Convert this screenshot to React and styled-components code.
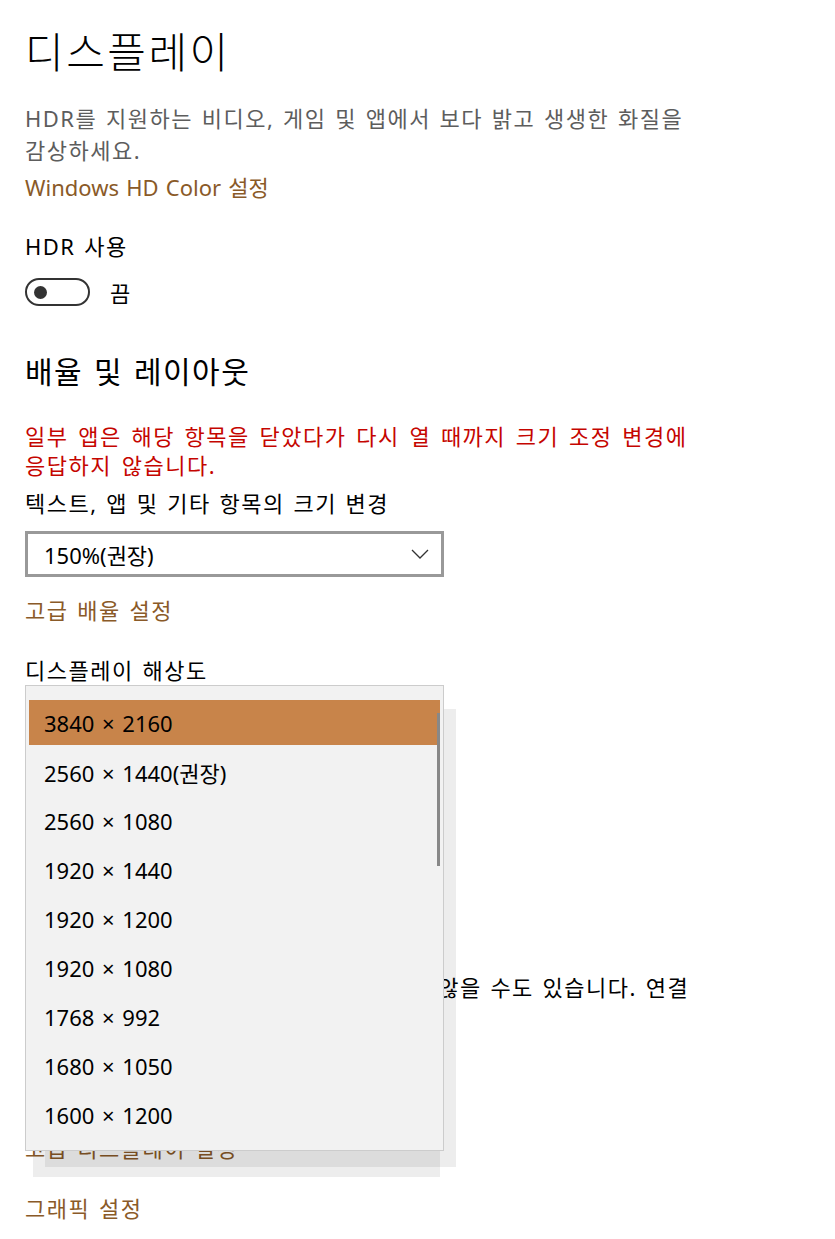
import React from 'react'
import styled, { createGlobalStyle } from 'styled-components'

const GlobalStyle = createGlobalStyle`
    html, body {
        margin: 0;
        padding: 0;
        background: #fff;
    }
    body {
        font-family: "Noto Sans", "Noto Sans CJK KR", sans-serif;
        color: #000;
    }
`;

const resolutions = [
    '3840 × 2160',
    '2560 × 1440(권장)',
    '2560 × 1080',
    '1920 × 1440',
    '1920 × 1200',
    '1920 × 1080',
    '1768 × 992',
    '1680 × 1050',
    '1600 × 1200',
];

function Toggle({ label }) {
    return (
        <ToggleRow>
            <Track>
                <Knob />
            </Track>
            <ToggleText>{label}</ToggleText>
        </ToggleRow>
    )
}

function Chevron() {
    return (
        <svg width="18" height="10" viewBox="0 0 18 10">
            <path d="M1 1 L9 9 L17 1" fill="none" stroke="#333" strokeWidth="1.3" />
        </svg>
    )
}

function App() {
    return (
        <Page>
            <GlobalStyle />
            <Title>디스플레이</Title>
            <Description>HDR를 지원하는 비디오, 게임 및 앱에서 보다 밝고 생생한 화질을 감상하세요.</Description>
            <Link $top={5} $latin>Windows HD Color 설정</Link>

            <Label $top={27}>HDR 사용</Label>
            <Toggle label="끔" />

            <SectionTitle>배율 및 레이아웃</SectionTitle>
            <Warning>일부 앱은 해당 항목을 닫았다가 다시 열 때까지 크기 조정 변경에 응답하지 않습니다.</Warning>
            <Label $top={7}>텍스트, 앱 및 기타 항목의 크기 변경</Label>
            <Select>
                <span>150%(권장)</span>
                <Chevron />
            </Select>
            <Link $top={17}>고급 배율 설정</Link>

            <Label $top={28}>디스플레이 해상도</Label>
            <ResolutionArea>
                <Select>
                    <span>3840 × 2160</span>
                    <Chevron />
                </Select>
                <Label $top={28}>디스플레이 방향</Label>
                <Select>
                    <span>가로</span>
                    <Chevron />
                </Select>
                <SectionTitle $top={30}>여러 디스플레이</SectionTitle>
                <Body>이전 디스플레이는 늘 자동으로 연결되지 않을 수도 있습니다. 연결을 시도하려면 검색을 선택하세요.</Body>
                <Button>검색</Button>
                <Link $top={43}>고급 디스플레이 설정</Link>

                <Popup>
                    <List>
                        {resolutions.map((r, i) => (
                            <Option key={r} $selected={i === 0}>{r}</Option>
                        ))}
                    </List>
                    <ScrollThumb />
                </Popup>
            </ResolutionArea>
            <Link $top={28}>그래픽 설정</Link>
        </Page>
    )
}

const Page = styled.div`
    padding: 22px 0 40px 25px;
    width: 700px;
    min-height: 1239px;
    box-sizing: border-box;
    letter-spacing: 1.5px;
    word-spacing: 1.5px;
    word-break: keep-all;
    & > * {
        max-width: 672px;
    }
`;

const Title = styled.h1`
    margin: 0;
    font-size: 42px;
    font-weight: 300;
    line-height: 60px;
    letter-spacing: 2.5px;
`;

const Description = styled.p`
    margin: 20px 0 0;
    font-size: 22px;
    line-height: 32px;
    color: #5d5d5d;
`;

const Link = styled.div`
    margin-top: ${p => p.$top}px;
    font-size: 22px;
    line-height: 32px;
    color: #8a5a28;
    letter-spacing: ${p => p.$latin ? '0' : '1.5px'};
`;

const Label = styled.div`
    margin-top: ${p => p.$top || 0}px;
    font-size: 22px;
    line-height: 32px;
`;

const ToggleRow = styled.div`
    display: flex;
    align-items: center;
    gap: 20px;
    margin-top: 14px;
    height: 32px;
`;

const Track = styled.div`
    width: 65px;
    height: 28px;
    box-sizing: border-box;
    border: 2.5px solid #333;
    border-radius: 14px;
    display: flex;
    align-items: center;
    padding-left: 7px;
`;

const Knob = styled.div`
    width: 13px;
    height: 13px;
    border-radius: 50%;
    background: #333;
`;

const ToggleText = styled.span`
    font-size: 22px;
`;

const SectionTitle = styled.h2`
    margin: ${p => p.$top || 44}px 0 0;
    font-size: 30px;
    font-weight: 400;
    line-height: 40px;
    letter-spacing: 1.5px;
`;

const Warning = styled.p`
    margin: 30px 0 0;
    font-size: 22px;
    line-height: 29px;
    color: #c50500;
    word-spacing: 2.5px;
`;

const Select = styled.div`
    margin-top: 12px;
    width: 419px;
    height: 46px;
    box-sizing: border-box;
    border: 3px solid #999;
    display: flex;
    align-items: center;
    justify-content: space-between;
    padding: 0 12px 0 16px;
    font-size: 22px;
    letter-spacing: 0;
`;

const ResolutionArea = styled.div`
    position: relative;
    display: flow-root;
`;

const Body = styled.p`
    margin: 39px 0 0;
    font-size: 22px;
    line-height: 32px;
    word-break: normal;
`;

const Button = styled.div`
    margin-top: 14px;
    width: 110px;
    height: 40px;
    background: #ccc;
`;

const Popup = styled.div`
    position: absolute;
    left: 0;
    top: -1px;
    width: 419px;
    height: 466px;
    box-sizing: border-box;
    background: #f2f2f2;
    border: 1px solid #ccc;
    padding: 14px 3px 0 3px;
    box-shadow: 16px 20px 0 -4px rgba(0, 0, 0, 0.07), 2px 32px 0 -6px rgba(0, 0, 0, 0.07);
`;

const List = styled.div`
    display: flex;
    flex-direction: column;
    gap: 4px;
`;

const Option = styled.div`
    height: 45px;
    display: flex;
    align-items: center;
    padding-left: 15px;
    font-size: 22px;
    letter-spacing: 0;
    word-spacing: 2px;
    background: ${p => p.$selected ? '#c8844a' : 'transparent'};
`;

const ScrollThumb = styled.div`
    position: absolute;
    right: 3px;
    top: 27px;
    width: 3px;
    height: 153px;
    background: #888;
`;

export default App
